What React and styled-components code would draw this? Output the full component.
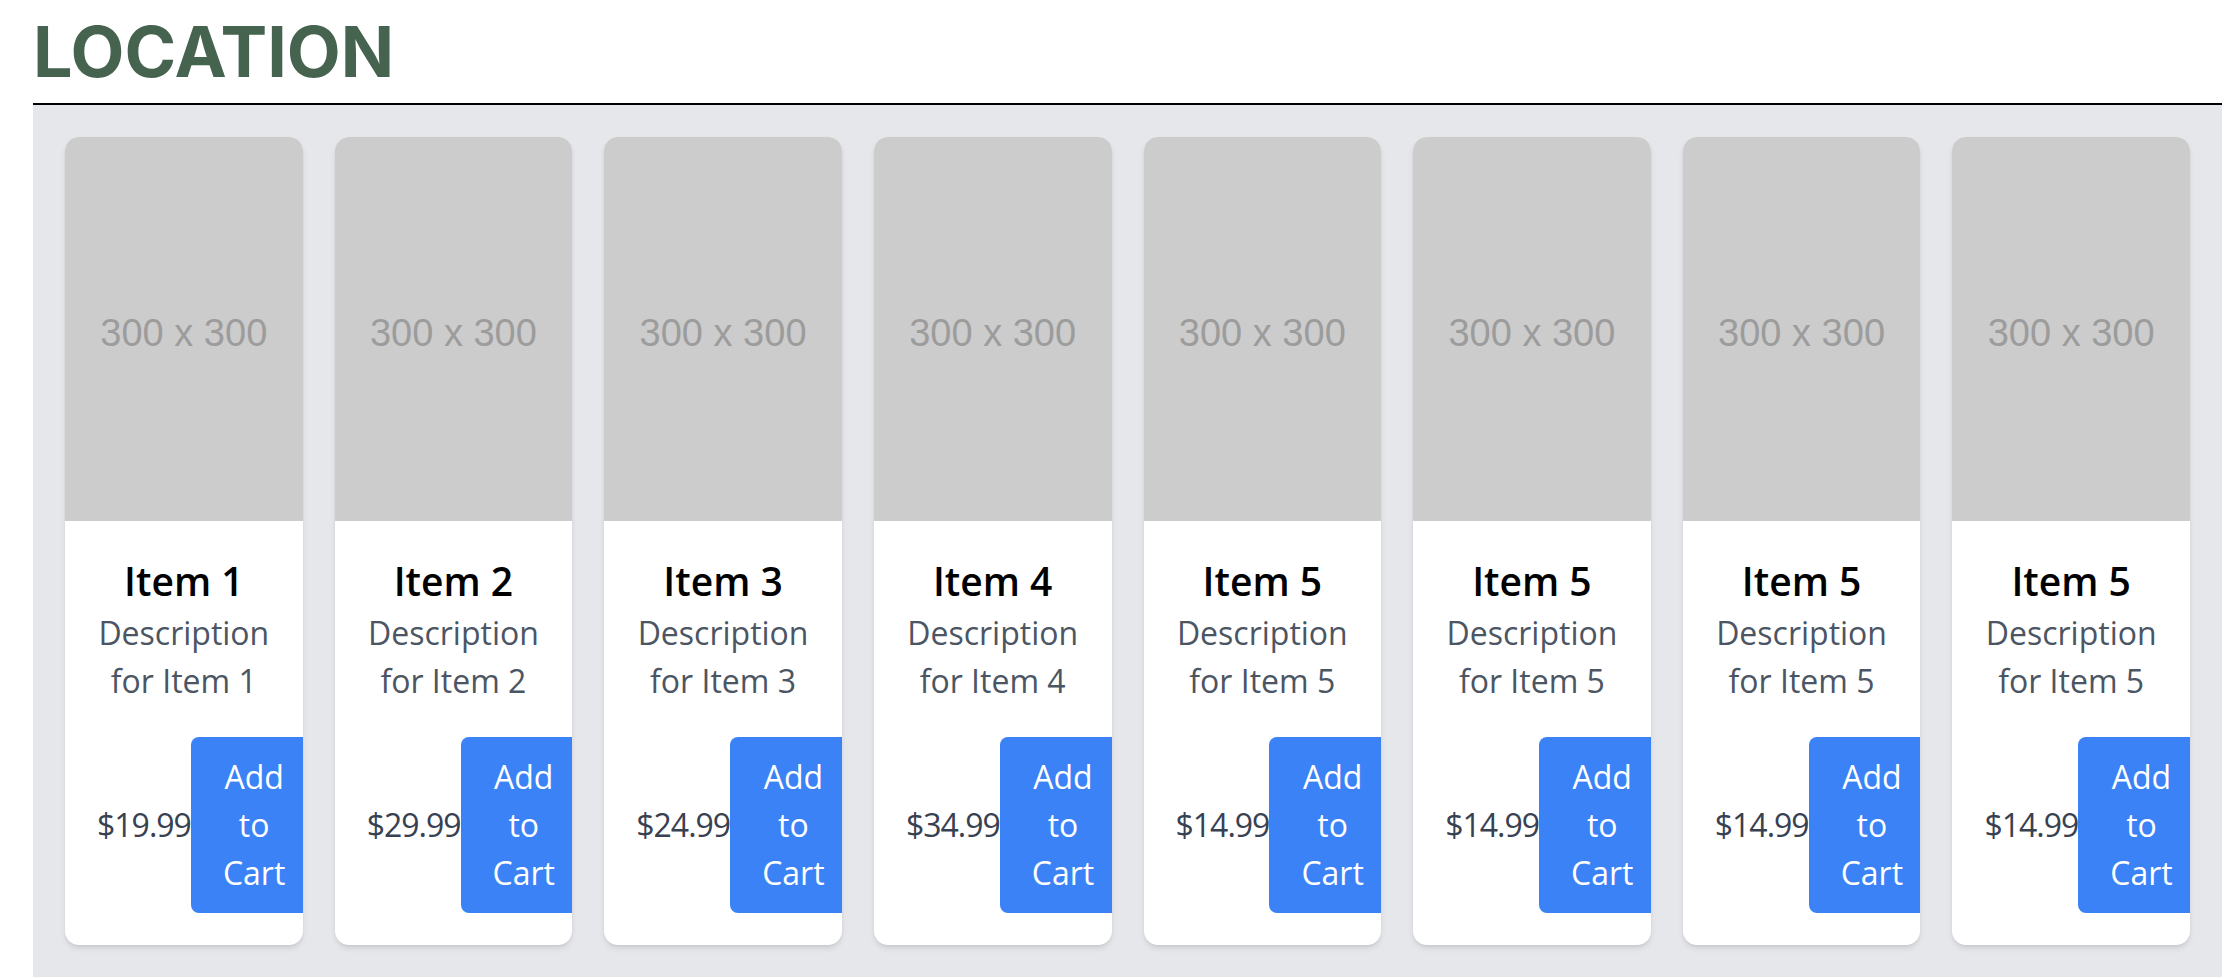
import React from "react";
import styled, { createGlobalStyle } from "styled-components";

const GlobalStyle = createGlobalStyle`
	body {
		margin: 0;
		background: #ffffff;
		font-family: "Segoe UI", "Open Sans", "Noto Sans", sans-serif;
	}
`;

const items = [
	{ id: 1, name: "Item 1", price: "$19.99" },
	{ id: 2, name: "Item 2", price: "$29.99" },
	{ id: 3, name: "Item 3", price: "$24.99" },
	{ id: 4, name: "Item 4", price: "$34.99" },
	{ id: 5, name: "Item 5", price: "$14.99" },
	{ id: 6, name: "Item 5", price: "$14.99" },
	{ id: 7, name: "Item 5", price: "$14.99" },
	{ id: 8, name: "Item 5", price: "$14.99" },
];

const App = () => {
	return (
		<>
			<GlobalStyle />
			<Page>
				<Heading>LOCATION</Heading>
				<Shelf>
					{items.map((item) => (
						<Card key={item.id}>
							<Placeholder>300 x 300</Placeholder>
							<CardBody>
								<Title>{item.name}</Title>
								<Description>Description for {item.name}</Description>
								<Footer>
									<Price>{item.price}</Price>
									<CartButton>Add to Cart</CartButton>
								</Footer>
							</CardBody>
						</Card>
					))}
				</Shelf>
			</Page>
		</>
	);
};

const Page = styled.div`
	padding: 0 6px 0 33px;
`;

const Heading = styled.h1`
	margin: 12px 0 11px;
	font-family: "Inter", "Noto Sans", sans-serif;
	font-weight: 700;
	font-size: 70px;
	line-height: 80px;
	color: #46634f;
	letter-spacing: 0;
`;

const Shelf = styled.div`
	border-top: 2px solid #000000;
	background: #e5e7eb;
	padding: 32px;
	display: grid;
	grid-template-columns: repeat(8, minmax(0, 1fr));
	gap: 32px;
`;

const Card = styled.div`
	background: #ffffff;
	border-radius: 14px;
	overflow: hidden;
	box-shadow: 0 4px 6px -1px rgba(0, 0, 0, 0.1), 0 2px 4px -2px rgba(0, 0, 0, 0.1);
	display: flex;
	flex-direction: column;
`;

const Placeholder = styled.div`
	height: 384px;
	box-sizing: border-box;
	padding-top: 9px;
	background: #cccccc;
	display: flex;
	align-items: center;
	justify-content: center;
	font-family: "Liberation Sans", Arial, sans-serif;
	font-size: 38px;
	color: #9c9c9c;
	white-space: nowrap;
`;

const CardBody = styled.div`
	padding: 32px;
	text-align: center;
`;

const Title = styled.h3`
	margin: 0;
	font-size: 39px;
	line-height: 56px;
	font-weight: 600;
	color: #000000;
`;

const Description = styled.p`
	margin: 0;
	font-size: 32px;
	line-height: 48px;
	color: #4b5563;
`;

const Footer = styled.div`
	margin-top: 32px;
	display: flex;
	justify-content: space-between;
	align-items: center;
`;

const Price = styled.span`
	font-size: 32px;
	line-height: 48px;
	color: #374151;
	letter-spacing: -1px;
`;

const CartButton = styled.button`
	background: #3b82f6;
	color: #ffffff;
	border: none;
	border-radius: 8px;
	padding: 16px 32px;
	font-family: inherit;
	font-size: 32px;
	line-height: 48px;
	cursor: pointer;
`;

export default App;
